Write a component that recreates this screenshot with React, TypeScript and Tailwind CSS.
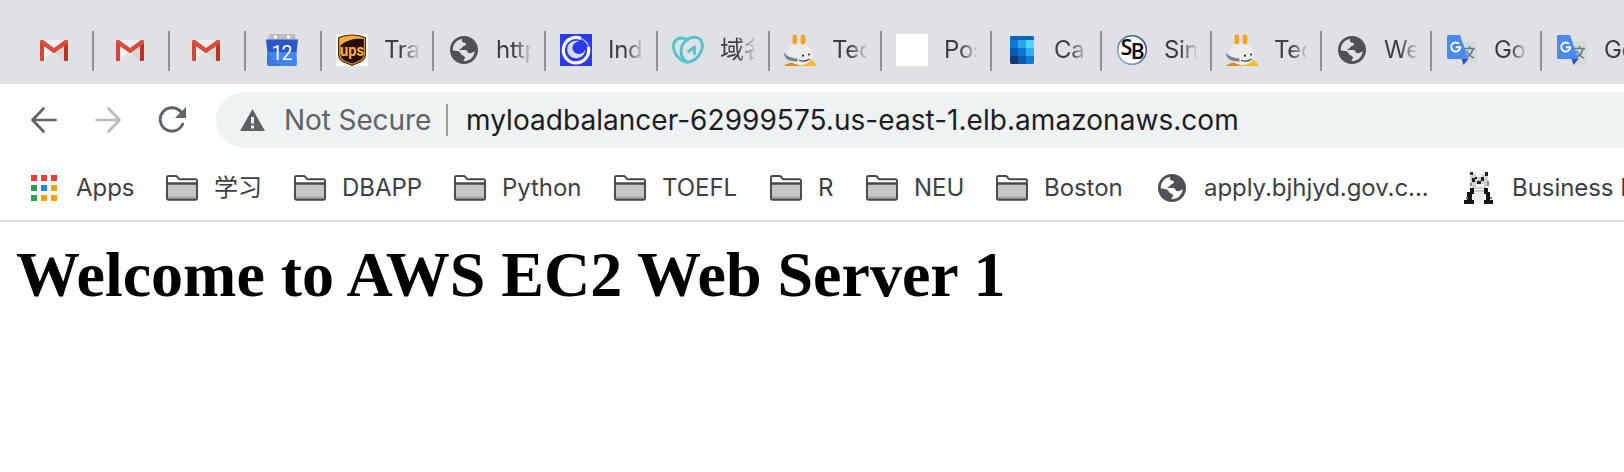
import React from "react";

const ui = "font-['Inter','Noto_Sans_CJK_SC',sans-serif]";

const Gmail = () => (
  <svg viewBox="0 0 32 32" className="size-8 shrink-0">
    <path d="M4 6h24v21H4z" fill="#f0f0f0" />
    <path d="M4 27 16 17l12 10z" fill="#e2e2e2" />
    <path d="M16 18 28 9v18h-3z" fill="#d6d6d6" />
    <path d="M2 8v18a1 1 0 0 0 1 1h3V11z" fill="#d3473a" />
    <path d="M30 8v18a1 1 0 0 1-1 1h-3V11z" fill="#b93427" />
    <path d="M2 9.500V7.500C2 6 4.200 5.300 5.400 6.300L16 14l10.600-7.700C27.800 5.300 30 6 30 7.500v2L16 19.300z" fill="#dc4a3d" />
  </svg>
);

const CalendarDay = () => (
  <svg viewBox="0 0 32 32" className="size-8 shrink-0">
    <path d="M3 0h26l1 7H2z" fill="#bdbdbd" />
    <circle cx="9.500" cy="3" r="1.700" fill="#fff" />
    <circle cx="22.500" cy="3" r="1.700" fill="#fff" />
    <path d="M0 5.500h32L30.500 19h-29z" fill="#2a56c6" />
    <path d="M1.500 18h29l.5 12a2 2 0 0 1-2 2H3a2 2 0 0 1-2-2z" fill="#4285f4" />
    <path d="M6 24 14 32H3l-2-2V18z" fill="#3b76e0" />
    <text x="15.500" y="25.500" textAnchor="middle" fontFamily="Roboto, sans-serif" fontSize="19.500" letterSpacing="-1" fill="#f4f7ff">12</text>
  </svg>
);

const Ups = () => (
  <svg viewBox="0 0 32 32" className="size-8 shrink-0">
    <path d="M0 0h32v32H0z" fill="#fff" />
    <path d="M2 3.500C10-.5 22-.5 30 3.500V20c0 5-3 7.500-7 9l-7 3-7-3c-4-1.500-7-4-7-9z" fill="#4a1d05" />
    <path d="M3.200 4.200C11 .6 21 .6 28.800 4.200V20c0 4.500-2.600 6.600-6.300 8L16 30.800 9.500 28c-3.700-1.400-6.300-3.500-6.300-8z" fill="#f6ae3a" />
    <path d="M4.500 11.500C11 6 19 4.300 27.800 5V20c0 4-2.500 5.900-5.800 7.200L16 29.700l-6-2.500C6.700 25.900 4.500 24 4.500 20z" fill="#2a0d02" />
    <text x="16" y="21.500" textAnchor="middle" textLength="24" lengthAdjust="spacingAndGlyphs" fontFamily="Roboto, sans-serif" fontWeight="700" fontSize="17" fill="#f9b03a">ups</text>
  </svg>
);

const Globe = () => (
  <svg viewBox="0 0 32 32" className="size-8 shrink-0">
    <path fillRule="evenodd" fill="#505155" d="M16 2a14 14 0 1 1 0 28 14 14 0 0 1 0-28zM4.800 16.500C9 16.500 12.300 17.500 13 20c.5 1.500 3.500 1.500 4 3.200.4 1.800-2 2.300-1.500 4.100 6 0 10.500-4.300 11.300-9.800-2.800.8-3.300 1.700-5.300 1.700-2.200 0-2-3.200-4-3.200h-5c-1.300 0-1.500-1 0-1.200 2.300-.3 1.500-2.600 3.500-2.800 2-.2 2.500-3 1-3.200-2.500 0-4-1.800-2.500-4.100C9 5.200 4.600 10 4.800 16.500z" />
  </svg>
);

const Swirl = () => (
  <svg viewBox="0 0 32 32" className="size-8 shrink-0">
    <path d="M0 0h32v32H0z" fill="#2b3be8" />
    <path d="M21 4.500A12.700 12.700 0 1 0 28.300 13" fill="none" stroke="#fff" strokeWidth="3.200" />
    <path d="M21 4.500c4.500 2 7 5 7.300 8.500" fill="none" stroke="#9da5f6" strokeWidth="1.500" />
    <path d="M19 7.200C12 5.500 7 10 7.200 16c.3 5.500 5 8.800 10 8.200 4.600-.6 7.800-4 8.300-8.700-2 3.700-5 5.200-8.300 4.300-4-1.100-5.700-5-4.200-8.300 1-2.300 3-3.800 6-4.300z" fill="#d5d9ff" />
  </svg>
);

const HeartG = () => (
  <svg viewBox="0 0 32 32" className="size-8 shrink-0" fill="none" stroke="#53c3cb" strokeWidth="2.900" strokeLinejoin="round">
    <path d="M15.500 28.300C8 27 1.700 20 1.500 12.500 1.500 4.500 9 1.500 16.500 6.500" />
    <path d="M15.500 28.300C11.500 26 8.800 22 9 17 9.300 9 16 3 23 3.300c5 .3 7.500 4 7.400 8.700C30 19.500 24 27 15.500 28.300z" />
    <path d="M15.700 18.200 22.500 13v5.500c0 1-.2 1.500-.7 2.300" />
  </svg>
);

const Rabbit = () => (
  <svg viewBox="0 0 32 32" className="size-8 shrink-0">
    <path d="M0 32c2-2 6-3.500 10-3.500L16 32z" fill="#e08a1a" />
    <path d="M14 32 26 24l6 6v2z" fill="#f6bd2f" />
    <path d="M14.500 8C21 8 27.800 14 27.800 20.500S23 31 16.500 31 4.500 27 3.500 20.500C3 14 8 8 14.500 8z" fill="#ececed" />
    <rect x="8.500" y=".5" width="4.600" height="10" rx="2.200" fill="#f3a31f" />
    <rect x="16.700" y=".5" width="4.600" height="10" rx="2.200" fill="#f3a31f" />
    <path d="M0 18.500c1.500 1.500 4 5.500 13.500 6v3C6 27.500 0 25.500 0 18.500z" fill="#7e8290" />
    <path d="M15.500 26.200c3 1.300 7 .8 9.500-1" fill="none" stroke="#3a3c42" strokeWidth="1.100" strokeLinecap="round" />
    <circle cx="19" cy="21.700" r="1.100" fill="#222" />
    <circle cx="25" cy="20.600" r="1" fill="#222" />
  </svg>
);

const Blank = () => <span className="size-8 shrink-0 bg-white" />;

const OutlookCal = () => (
  <svg viewBox="0 0 32 32" className="size-8 shrink-0">
    <clipPath id="oc"><rect x="4" y="2" width="24" height="28" rx="2" /></clipPath>
    <g clipPath="url(#oc)">
      <path d="M4 2h24v28H4z" fill="#0f78d4" />
      <path d="M4 2h24v4H4z" fill="#0364b8" />
      <path d="M4 6h8v8H4z" fill="#1078d0" />
      <path d="M12 6h8v8h-8z" fill="#28a8ea" />
      <path d="M20 6h8v8h-8z" fill="#50d9ff" />
      <path d="M4 14h8v8H4z" fill="#0a5cb0" />
      <path d="M12 14h8v8h-8z" fill="#0f78d4" />
      <path d="M20 14h8v8h-8z" fill="#30aeed" />
      <path d="M4 22h8v8H4z" fill="#14396e" />
      <path d="M12 22h8v8h-8z" fill="#0a5cb0" />
      <path d="M20 22h8v8h-8z" fill="#1078d6" />
    </g>
  </svg>
);

const StackB = () => (
  <svg viewBox="0 0 32 32" className="size-8 shrink-0">
    <defs>
      <linearGradient id="sb" x1="1" y1="0" x2="0" y2="1">
        <stop offset="0" stopColor="#27457c" />
        <stop offset="1" stopColor="#9fb4d0" />
      </linearGradient>
    </defs>
    <circle cx="16" cy="16" r="14.300" fill="#fff" stroke="url(#sb)" strokeWidth="1.600" />
    <text x="4.800" y="21" fontFamily="Open Sans, sans-serif" fontWeight="600" fontSize="21" fill="#000">S</text>
    <text x="14.800" y="25" fontFamily="Open Sans, sans-serif" fontWeight="600" fontSize="21" fill="#000">B</text>
  </svg>
);

const Translate = () => (
  <svg viewBox="0 0 32 32" className="size-8 shrink-0">
    <path d="M12 7h17.500A1.500 1.500 0 0 1 31 8.500v21a1.500 1.500 0 0 1-1.500 1.500H18z" fill="#d9dbdb" />
    <g stroke="#607d8b" strokeWidth="1.600" fill="none">
      <path d="M18 14.500h11M23.500 12v2.500M27 14.500c-.8 4-4 7.500-7.500 9.500M20.500 16.500c1.500 3.500 4 6 7.500 7.500" />
    </g>
    <path d="M15.500 25h7L17.500 31z" fill="#3a4fb8" />
    <path d="M2.500 1H14l8.500 24H2.500A1.500 1.500 0 0 1 1 23.500v-21A1.500 1.500 0 0 1 2.500 1z" fill="#4a8af4" />
    <path d="M13 9.900a4.500 4.500 0 1 0 1.200 3.400H9.800" fill="none" stroke="#fff" strokeWidth="1.900" />
  </svg>
);

const Panda = () => (
  <svg viewBox="0 0 32 32" className="size-8 shrink-0" shapeRendering="crispEdges">
    <path d="M9 2h14v2h2v10h-2v3H9v-3H7V4h2z" fill="#d2d2d2" />
    <path d="M13 1h6v4h-6zM13 12h8v3h-8z" fill="#f1f1f1" />
    <path d="M7 0h3v3H7zM22 0h3v4h-3zM9 6h3v4H9zM18 5h3v4h-3zM12 5h2v2h-2zM14 9h4v3h-4z" fill="#202020" />
    <path d="M24 9h2v5h-2zM7 11h2v3H7z" fill="#8a8a8a" />
    <path d="M11 18h10v13H11z" fill="#ededed" />
    <path d="M7 16h4v2h10v-2h4v4h2v8h3v4h-9v-4h2v-6h-2v-3H11v3H9v6h2v4H1v-4h3v-8h3z" fill="#171414" />
    <path d="M11 18h10v2H11z" fill="#c9c9c9" />
    <path d="M3 25h2v2H3zM27 25h2v2h-2z" fill="#777" />
  </svg>
);

const Folder = () => (
  <svg viewBox="0 0 32 26" className="h-[26px] w-8 shrink-0">
    <path d="M1 8.500h30V23a1.500 1.500 0 0 1-1.500 1.500h-27A1.500 1.500 0 0 1 1 23z" fill="#c6c6c6" />
    <path d="M1.500 21.500h29v2.500h-29z" fill="#a5a5a5" />
    <path d="M1 8.500V2.500A1.500 1.500 0 0 1 2.500 1h7c.8 0 1.200.3 1.700.9l1.300 1.700c.4.500.8.700 1.500.7h15.500A1.500 1.500 0 0 1 31 5.800V23.200a1.500 1.500 0 0 1-1.500 1.500h-27A1.500 1.500 0 0 1 1 23.200zh30" fill="none" stroke="#474747" strokeWidth="1.900" />
    <path d="M2 8.500h28" stroke="#474747" strokeWidth="1.900" />
  </svg>
);

const AppsGrid = () => (
  <span className="grid size-[26px] shrink-0 grid-cols-3 gap-1">
    <i className="bg-[#fa3a32]" /><i className="bg-[#fa3a32]" /><i className="bg-[#fa3a32]" />
    <i className="bg-[#2f9e56]" /><i className="bg-[#1e88f5]" /><i className="bg-[#f4a300]" />
    <i className="bg-[#2f9e56]" /><i className="bg-[#f4a300]" /><i className="bg-[#f4a300]" />
  </span>
);

const tabs: { icon: React.ReactNode; label: string; w: string }[] = [
  { icon: <Ups />, label: "Tra", w: "w-28" },
  { icon: <Globe />, label: "http", w: "w-28" },
  { icon: <Swirl />, label: "Ind", w: "w-28" },
  { icon: <HeartG />, label: "域名", w: "w-28" },
  { icon: <Rabbit />, label: "Tec", w: "w-28" },
  { icon: <Blank />, label: "Pos", w: "w-[110px]" },
  { icon: <OutlookCal />, label: "Ca", w: "w-[110px]" },
  { icon: <StackB />, label: "Sin", w: "w-[110px]" },
  { icon: <Rabbit />, label: "Tec", w: "w-[110px]" },
  { icon: <Globe />, label: "We", w: "w-[110px]" },
  { icon: <Translate />, label: "Go", w: "w-[110px]" },
  { icon: <Translate />, label: "Go", w: "w-[110px]" },
];

const bookmarks = [
  { label: "学习", w: "w-32" },
  { label: "DBAPP", w: "w-40" },
  { label: "Python", w: "w-40" },
  { label: "TOEFL", w: "w-[156px]" },
  { label: "R", w: "w-24" },
  { label: "NEU", w: "w-[130px]" },
  { label: "Boston", w: "w-40" },
];

export default function App() {
  return (
    <div className={`h-[472px] w-[1624px] overflow-hidden bg-white ${ui}`}>
      <div className="flex h-[84px] bg-[#dfe1e5] pt-[31px]">
        <div className="flex h-10 w-[92px] shrink-0 items-center pb-[2px] pl-[38px]"><Gmail /></div>
        <div className="flex h-10 w-[76px] shrink-0 items-center border-l-2 border-[#8f9195] pb-[2px] pl-5"><Gmail /></div>
        <div className="flex h-10 w-[76px] shrink-0 items-center border-l-2 border-[#8f9195] pb-[2px] pl-5"><Gmail /></div>
        <div className="flex h-10 w-[76px] shrink-0 items-center border-l-2 border-[#8f9195] pb-[2px] pl-5"><CalendarDay /></div>
        {tabs.map((t, i) => (
          <div key={i} className={`flex h-10 shrink-0 items-center border-l-2 border-[#8f9195] pb-[2px] pl-[14px] pr-[14px] ${t.w}`}>
            {t.icon}
            <span className="ml-4 min-w-0 flex-1 overflow-hidden whitespace-nowrap text-[24px] leading-8 tracking-[-0.3px] text-[#3c4043] [mask-image:linear-gradient(to_right,black_50%,rgba(0,0,0,0.15)_100%)]">
              {t.label}
            </span>
          </div>
        ))}
      </div>

      <div className="flex h-[72px] items-center">
        <svg viewBox="0 0 28 28" className="ml-[30px] size-7 shrink-0" fill="none" stroke="#5f6368" strokeWidth="2.700" strokeLinecap="round" strokeLinejoin="round">
          <path d="M25.500 14H2.500M13.500 2.500 2.500 14l11 11.500" />
        </svg>
        <svg viewBox="0 0 28 28" className="ml-9 size-7 shrink-0" fill="none" stroke="#babcbe" strokeWidth="2.700" strokeLinecap="round" strokeLinejoin="round">
          <path d="M2.500 14h23M14.500 2.500l11 11.500-11 11.500" />
        </svg>
        <svg viewBox="0 0 28 28" className="ml-9 size-7 shrink-0">
          <path d="M23.300 6.400A11.700 11.700 0 1 0 24.700 18" fill="none" stroke="#5f6368" strokeWidth="2.900" strokeLinecap="round" />
          <path d="M28 1v11H17z" fill="#5f6368" />
        </svg>
        <div className="ml-[30px] flex h-14 flex-1 items-center rounded-l-full bg-[#eef2f3] pl-6">
          <svg viewBox="0 0 25 22" className="h-[22px] w-[25px] shrink-0">
            <path d="M12.500 0 25 22H0z" fill="#5f6063" />
            <path d="M11 8h3v6.500h-3zM11 16.500h3v3h-3z" fill="#eef2f3" />
          </svg>
          <span className="ml-[19px] w-[162px] whitespace-nowrap text-[28px] leading-10 tracking-[-0.1px] text-[#616365]">Not Secure</span>
          <span className="h-8 w-[2px] bg-[#9b9da0]" />
          <span className="ml-[18px] whitespace-nowrap text-[28px] leading-10 tracking-[0.04px] text-[#1c1d20]">
            myloadbalancer-62999575.us-east-1.elb.amazonaws.com
          </span>
        </div>
      </div>

      <div className="flex h-[66px] items-center overflow-hidden border-b-2 border-[#dadce0] text-[24px] leading-8 tracking-[-0.05px] whitespace-nowrap text-[#3c4043]">
        <div className="flex w-[166px] shrink-0 items-center pl-[31px]">
          <AppsGrid />
          <span className="ml-[19px]">Apps</span>
        </div>
        {bookmarks.map((b) => (
          <div key={b.label} className={`flex shrink-0 items-center ${b.w}`}>
            <Folder />
            <span className="ml-4">{b.label}</span>
          </div>
        ))}
        <div className="flex w-[307px] shrink-0 items-center">
          <Globe />
          <span className="ml-4">apply.bjhjyd.gov.c...</span>
        </div>
        <div className="flex shrink-0 items-center">
          <Panda />
          <span className="ml-[17px]">Business I</span>
        </div>
      </div>

      <h1 className="mt-[17px] ml-4 whitespace-nowrap font-['Liberation_Serif',serif] text-[64px] leading-[72px] font-bold text-black">
        Welcome to AWS EC2 Web Server 1
      </h1>
    </div>
  );
}
